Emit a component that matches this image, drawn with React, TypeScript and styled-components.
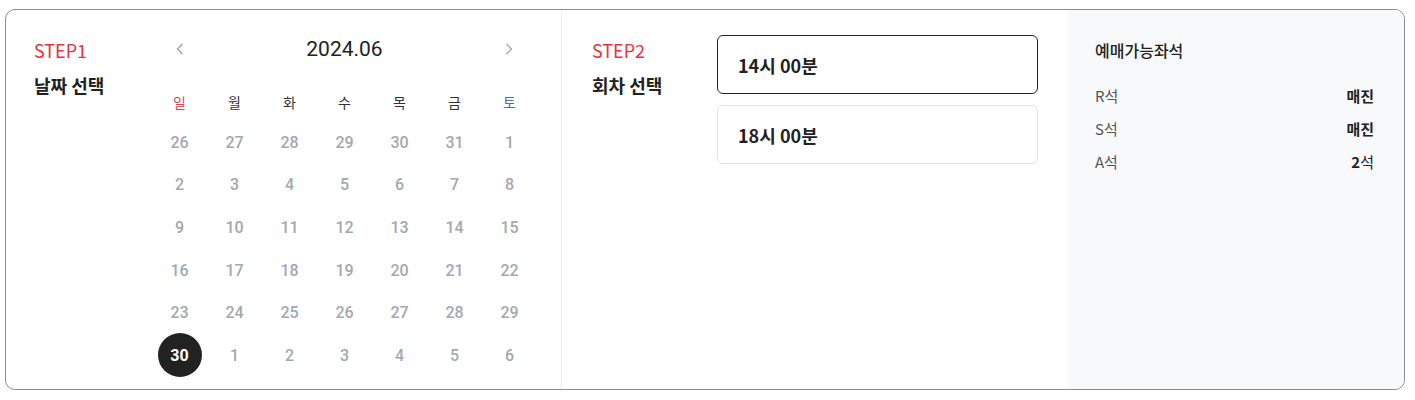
import styled, { createGlobalStyle } from 'styled-components';

const GlobalStyle = createGlobalStyle`
  * { box-sizing: border-box; }
  body {
    margin: 0;
    background: #fff;
    font-family: 'Noto Sans CJK KR', 'Noto Sans', sans-serif;
    color: #222;
  }
`;

const weekdays = ['일', '월', '화', '수', '목', '금', '토'];

const dates = [
  26, 27, 28, 29, 30, 31, 1,
  2, 3, 4, 5, 6, 7, 8,
  9, 10, 11, 12, 13, 14, 15,
  16, 17, 18, 19, 20, 21, 22,
  23, 24, 25, 26, 27, 28, 29,
  30, 1, 2, 3, 4, 5, 6,
];

const times = ['14시 00분', '18시 00분'];

const seats = [
  { grade: 'R석', left: '매진' },
  { grade: 'S석', left: '매진' },
  { grade: 'A석', left: '2', unit: '석' },
];

const Chevron = ({ dir }: { dir: 'left' | 'right' }) => (
  <svg width="8" height="12" viewBox="0 0 8 12" fill="none">
    <path
      d={dir === 'left' ? 'M6.5 1L1.5 6L6.5 11' : 'M1.5 1L6.5 6L1.5 11'}
      stroke="#9a9a9a"
      strokeWidth="1.2"
    />
  </svg>
);

const App = () => {
  return (
    <>
      <GlobalStyle />
      <Wrapper>
        <DateSection>
          <StepTitle>
            <Step>STEP1</Step>
            <StepName>날짜 선택</StepName>
          </StepTitle>
          <Calendar>
            <MonthBar>
              <ArrowButton>
                <Chevron dir="left" />
              </ArrowButton>
              <Month>2024.06</Month>
              <ArrowButton>
                <Chevron dir="right" />
              </ArrowButton>
            </MonthBar>
            <WeekRow>
              {weekdays.map((d, i) => (
                <Weekday key={d} day={i}>
                  {d}
                </Weekday>
              ))}
            </WeekRow>
            <DateGrid>
              {dates.map((d, i) => (
                <DateCell key={i}>
                  <DateNum selected={i === 35}>{d}</DateNum>
                </DateCell>
              ))}
            </DateGrid>
          </Calendar>
        </DateSection>

        <TimeSection>
          <StepTitle>
            <Step>STEP2</Step>
            <StepName>회차 선택</StepName>
          </StepTitle>
          <TimeList>
            {times.map((t, i) => (
              <TimeButton key={t} active={i === 0}>
                {t}
              </TimeButton>
            ))}
          </TimeList>
        </TimeSection>

        <SeatPanel>
          <SeatTitle>예매가능좌석</SeatTitle>
          <SeatList>
            {seats.map((s) => (
              <SeatRow key={s.grade}>
                <SeatGrade>{s.grade}</SeatGrade>
                <SeatLeft>
                  {s.left}
                  {s.unit && <SeatUnit>{s.unit}</SeatUnit>}
                </SeatLeft>
              </SeatRow>
            ))}
          </SeatList>
        </SeatPanel>
      </Wrapper>
    </>
  );
};

const Wrapper = styled.div`
  width: 1400px;
  height: 381px;
  margin: 9px 0 0 5px;
  display: flex;
  border: 1px solid #8c8c8c;
  border-radius: 10px;
  overflow: hidden;
`;

const DateSection = styled.div`
  width: 556px;
  display: flex;
  padding: 27px 0 0 28px;
  border-right: 1px solid #ececec;
`;

const StepTitle = styled.div`
  width: 118px;
  display: flex;
  flex-direction: column;
  flex-shrink: 0;
`;

const Step = styled.div`
  font-size: 18px;
  line-height: 26px;
  color: #e5343d;
`;

const StepName = styled.div`
  margin-top: 9px;
  font-size: 18px;
  font-weight: 700;
  line-height: 26px;
  color: #222;
`;

const Calendar = styled.div`
  width: 385px;
  display: flex;
  flex-direction: column;
`;

const MonthBar = styled.div`
  height: 30px;
  margin-top: -3px;
  display: flex;
  align-items: center;
  justify-content: space-between;
`;

const ArrowButton = styled.div`
  width: 55px;
  height: 30px;
  display: flex;
  align-items: center;
  justify-content: center;
`;

const Month = styled.div`
  font-family: Roboto, 'Noto Sans', sans-serif;
  font-size: 21px;
  color: #222;
`;

const WeekRow = styled.div`
  display: grid;
  grid-template-columns: repeat(7, 55px);
  height: 30px;
  margin-top: 23px;
`;

const Weekday = styled.div<{ day: number }>`
  display: flex;
  align-items: center;
  justify-content: center;
  font-size: 14px;
  color: ${({ day }) => (day === 0 ? '#d54848' : day === 6 ? '#4d6fa8' : '#333')};
`;

const DateGrid = styled.div`
  display: grid;
  grid-template-columns: repeat(7, 55px);
  grid-auto-rows: 42.6px;
  margin-top: 4px;
`;

const DateCell = styled.div`
  display: flex;
  align-items: center;
  justify-content: center;
`;

const DateNum = styled.div<{ selected?: boolean }>`
  width: 44px;
  height: 44px;
  border-radius: 50%;
  display: flex;
  align-items: center;
  justify-content: center;
  font-family: Roboto, 'Noto Sans', sans-serif;
  font-size: 16px;
  font-weight: ${({ selected }) => (selected ? 700 : 500)};
  color: ${({ selected }) => (selected ? '#fff' : '#a3a8ae')};
  background: ${({ selected }) => (selected ? '#222' : 'transparent')};
`;

const TimeSection = styled.div`
  width: 506px;
  display: flex;
  padding: 27px 30px 0 30px;
`;

const TimeList = styled.div`
  flex: 1;
  display: flex;
  flex-direction: column;
  gap: 11px;
  margin-left: 7px;
  margin-top: -2px;
`;

const TimeButton = styled.div<{ active?: boolean }>`
  height: 59px;
  display: flex;
  align-items: center;
  padding-left: 20px;
  border: 1px solid ${({ active }) => (active ? '#222' : '#e3e3e3')};
  border-radius: 6px;
  font-size: 18px;
  font-weight: 700;
  color: #222;
  background: #fff;
`;

const SeatPanel = styled.div`
  flex: 1;
  background: #f8f9fa;
  padding: 28px 30px 0 27px;
`;

const SeatTitle = styled.div`
  font-size: 16px;
  font-weight: 500;
  line-height: 24px;
  color: #222;
`;

const SeatList = styled.div`
  display: flex;
  flex-direction: column;
  margin-top: 17px;
`;

const SeatRow = styled.div`
  height: 33px;
  display: flex;
  align-items: center;
  justify-content: space-between;
  font-size: 15px;
`;

const SeatGrade = styled.div`
  color: #555;
`;

const SeatLeft = styled.div`
  font-weight: 700;
  color: #222;
`;

const SeatUnit = styled.span`
  font-weight: 400;
`;

export default App;
